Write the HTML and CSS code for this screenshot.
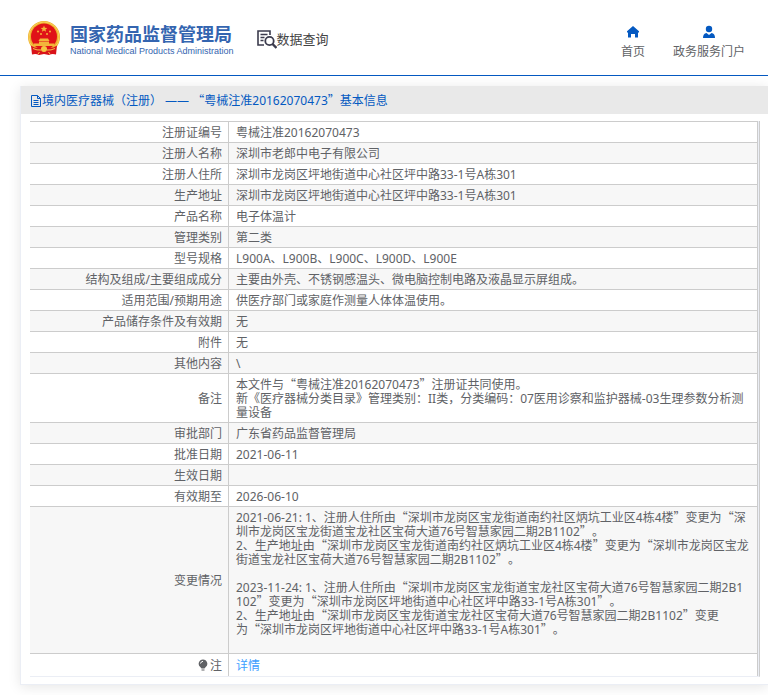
FILE: index.html
```html
<!DOCTYPE html>
<html>
<head>
    <meta charset="UTF-8">
    <meta name="viewport" content="width=device-width, initial-scale=1.0">
    <title>国家药品监督管理局 - 数据查询</title>
    <link rel="stylesheet" href="styles.css">
</head>
<body>

<!-- 页头 -->
    <header class="header">
        <a class="logo" href="#">
            <svg class="emblem" viewBox="0 0 34 36" aria-hidden="true">
                <circle cx="17" cy="17" r="16" fill="#efb02e"/>
                <circle cx="17" cy="17" r="15" fill="none" stroke="#f9d35c" stroke-width="1"/>
                <circle cx="17" cy="16.500" r="13" fill="#e01218"/>
                <path d="M17 5.500l.9 2.200 2.400.2-1.800 1.500.6 2.300-2.100-1.300-2.100 1.300.6-2.300-1.800-1.500 2.400-.2z" fill="#f3b53a"/>
                <g fill="#f3b53a">
                    <circle cx="11" cy="11.500" r="1"/>
                    <circle cx="23" cy="11.500" r="1"/>
                    <circle cx="14" cy="14" r="1"/>
                    <circle cx="20" cy="14" r="1"/>
                    <path d="M13 18.500h8l1.500 2.500h-11z"/>
                    <path d="M12 21.500h10v2h5.500v2.500h-21v-2.500h5.500z"/>
                </g>
                <path d="M4 25.500Q8 28.500 13 28h8q5 .5 9-2.500l-1 9q-4-1-7 .5l-5-1-5 1q-3-1.500-7-.5z" fill="#d9131a"/>
                <circle cx="17" cy="29" r="3" fill="#f6c644"/>
                <path d="M6 28.500q4 2 8 1.500M28 28.500q-4 2-8 1.500M11 34l1.500-2M23 34l-1.500-2" fill="none" stroke="#f6c644"/>
            </svg>
            <span class="logo-text">
                <span class="logo-cn">国家药品监督管理局</span>
                <span class="logo-en">National Medical Products Administration</span>
            </span>
        </a>
        <a class="search-link" href="#">
            <svg width="20" height="20" viewBox="0 0 20 20" fill="none" stroke="#3b3b4d" aria-hidden="true">
                <path d="M7 16H1V2h12v4" stroke-width="1.600"/>
                <path d="M3.500 5.500h7M3.500 8.500h4M3.500 11.500h3" stroke-width="1.400"/>
                <circle cx="12.500" cy="12" r="4.200" stroke-width="1.800"/>
                <path d="M15.500 15l4 4" stroke-width="2.400"/>
            </svg>
            <span>数据查询</span>
        </a>
        <nav class="nav">
            <a href="#">
                <svg width="14" height="14" viewBox="0 0 14 14" fill="#0459c1" aria-hidden="true">
                    <path d="M7 1l6 5.300v1.200h-1v5H9V9H5v3.500H2v-5H1V6.300z"/>
                </svg>
                <span>首页</span>
            </a>
            <a href="#">
                <svg width="14" height="14" viewBox="0 0 14 14" fill="#0459c1" aria-hidden="true">
                    <circle cx="7" cy="4" r="3.200"/>
                    <path d="M1 13q0-4.500 3.500-5L7 10l2.500-2q3.500.5 3.500 5z"/>
                </svg>
                <span>政务服务门户</span>
            </a>
        </nav>
    </header>

<!-- 注册信息 -->
    <main class="card">
        <h1 class="card-title">
            <svg width="12" height="12" viewBox="0 0 12 12" fill="none" stroke="#0459c1" aria-hidden="true">
                <path d="M1.500.5h6l3 3v8h-9zM7.500.5v3h3M3.500 5.500h5M3.500 7.500h5M3.500 9.500h5"/>
            </svg>
            <span>境内医疗器械（注册） —— <span class="q">“</span>粤械注准20162070473<span class="q">”</span>基本信息</span>
        </h1>
        <div class="table-wrap">
            <table class="info">
                <tr><th scope="row">注册证编号</th><td>粤械注准20162070473</td></tr>
                <tr><th scope="row">注册人名称</th><td>深圳市老郎中电子有限公司</td></tr>
                <tr><th scope="row">注册人住所</th><td>深圳市龙岗区坪地街道中心社区坪中路33-1号A栋301</td></tr>
                <tr><th scope="row">生产地址</th><td>深圳市龙岗区坪地街道中心社区坪中路33-1号A栋301</td></tr>
                <tr><th scope="row">产品名称</th><td>电子体温计</td></tr>
                <tr><th scope="row">管理类别</th><td>第二类</td></tr>
                <tr><th scope="row">型号规格</th><td>L900A、L900B、L900C、L900D、L900E</td></tr>
                <tr><th scope="row">结构及组成/主要组成成分</th><td>主要由外壳、不锈钢感温头、微电脑控制电路及液晶显示屏组成。</td></tr>
                <tr><th scope="row">适用范围/预期用途</th><td>供医疗部门或家庭作测量人体体温使用。</td></tr>
                <tr><th scope="row">产品储存条件及有效期</th><td>无</td></tr>
                <tr><th scope="row">附件</th><td>无</td></tr>
                <tr><th scope="row">其他内容</th><td>\</td></tr>
                <tr><th scope="row">备注</th><td>本文件与<span class="q">“</span>粤械注准20162070473<span class="q">”</span>注册证共同使用。<br>新《医疗器械分类目录》管理类别：II类，分类编码：07医用诊察和监护器械-03生理参数分析测量设备</td></tr>
                <tr><th scope="row">审批部门</th><td>广东省药品监督管理局</td></tr>
                <tr><th scope="row">批准日期</th><td>2021-06-11</td></tr>
                <tr><th scope="row">生效日期</th><td></td></tr>
                <tr><th scope="row">有效期至</th><td>2026-06-10</td></tr>
                <tr>
                    <th scope="row">变更情况</th>
                    <td>2021-06-21: 1、注册人住所由<span class="q">“</span>深圳市龙岗区宝龙街道南约社区炳坑工业区4栋4楼<span class="q">”</span>变更为<span class="q">“</span>深圳市龙岗区宝龙街道宝龙社区宝荷大道76号智慧家园二期2B1102<span class="q">”</span>。<br>2、生产地址由<span class="q">“</span>深圳市龙岗区宝龙街道南约社区炳坑工业区4栋4楼<span class="q">”</span>变更为<span class="q">“</span>深圳市龙岗区宝龙街道宝龙社区宝荷大道76号智慧家园二期2B1102<span class="q">”</span>。<br><br>2023-11-24: 1、注册人住所由<span class="q">“</span>深圳市龙岗区宝龙街道宝龙社区宝荷大道76号智慧家园二期2B1<br>102<span class="q">”</span>变更为<span class="q">“</span>深圳市龙岗区坪地街道中心社区坪中路33-1号A栋301<span class="q">”</span>。<br>2、生产地址由<span class="q">“</span>深圳市龙岗区宝龙街道宝龙社区宝荷大道76号智慧家园二期2B1102<span class="q">”</span>变更为<span class="q">“</span>深圳市龙岗区坪地街道中心社区坪中路33-1号A栋301<span class="q">”</span>。<br><br></td>
                </tr>
                <tr class="note">
                    <th scope="row"><svg class="bulb" width="10" height="12" viewBox="0 0 10 12" aria-hidden="true"><path d="M5 .5a4.300 4.300 0 0 1 2.500 7.800L6.500 9.500h-3L2.500 8.300A4.300 4.300 0 0 1 5 .5zM3.500 10.500h3v1h-3z" fill="#606266"/><path d="M2.500 4.500Q3 2.500 5 2.300" fill="none" stroke="#fff"/></svg>注</th>
                    <td><a href="#">详情</a></td>
                </tr>
            </table>
        </div>
    </main>

</body>
</html>
```
FILE: styles.css
```css
/* 全局 */
    * {
        box-sizing: border-box;
    }

    body {
        margin: 0;
        background: #fff;
        color: #606266;
        font-family: "Noto Sans", "Noto Sans CJK SC", sans-serif;
        font-size: 12px;
        line-height: 14px;
        text-spacing-trim: space-all;
    }

    a {
        color: #409eff;
        text-decoration: none;
    }

    svg {
        flex: none;
    }

    /* 全角引号 */
    .q {
        font-family: "Noto Sans CJK SC", sans-serif;
        line-height: 0;
    }

/* 页头 */
    .header {
        display: flex;
        align-items: center;
        height: 76px;
        padding: 0 23px 0 27px;
        border-bottom: 1px solid #0459c1;
    }

    .logo {
        display: flex;
        align-items: center;
        gap: 9px;
        color: #3465b0;
    }

    .emblem {
        width: 34px;
        height: 36px;
    }

    .logo-text {
        display: flex;
        flex-direction: column;
        gap: 2px;
        padding-top: 4px;
    }

    .logo-cn {
        font-family: "Noto Sans CJK SC", sans-serif;
        font-size: 18px;
        font-weight: bold;
        line-height: 20px;
    }

    .logo-en {
        font-family: "Liberation Sans", Arial, sans-serif;
        font-size: 9px;
        line-height: 12px;
    }

    .search-link {
        display: flex;
        align-items: center;
        margin-left: 23px;
        padding-top: 2px;
        color: #444;
        font-size: 13px;
    }

    .nav {
        display: flex;
        gap: 28px;
        margin-left: auto;
        padding-top: 9px;
    }

    .nav a {
        display: flex;
        flex-direction: column;
        align-items: center;
        gap: 6px;
        color: #606266;
    }

/* 信息卡片 */
    .card {
        margin: 10px 0 10px 20px;
        padding-bottom: 7px;
        border: 1px solid #ebeef5;
        border-width: 0 0 1px 1px;
        box-shadow: 0 2px 12px rgba(0, 0, 0, 0.1);
    }

    .card-title {
        display: flex;
        align-items: center;
        height: 28px;
        margin: 0;
        padding: 2px 9px 0;
        background: #e9e9e9;
        color: #0459c1;
        font-size: 12px;
        font-weight: normal;
    }

    .table-wrap {
        margin: 7px 8px 0 9px;
        padding-right: 1px;
        border-right: 1px solid #ccc;
        border-bottom: 1px solid #ebeef5;
        background: #ebeef5;
    }

/* 表格 */
    .info {
        width: 100%;
        border-collapse: separate;
        border-spacing: 0;
        border-right: 1px solid #ccc;
        background: #fff;
    }

    .info tr:nth-child(even) {
        background: #f7f7f7;
    }

    .info tr.note {
        background: #fff;
    }

    .info th,
    .info td {
        height: 21px;
        padding: 4px 6px 2px;
        border-top: 1px solid #ccc;
        font-weight: normal;
        word-break: break-all;
    }

    .info td {
        padding-left: 7px;
    }

    .info th {
        width: 199px;
        border-right: 1px solid #ccc;
        text-align: right;
    }

    .info .note th,
    .info .note td {
        height: 23px;
    }

    .bulb {
        margin-right: 2px;
        vertical-align: -1px;
    }
```
